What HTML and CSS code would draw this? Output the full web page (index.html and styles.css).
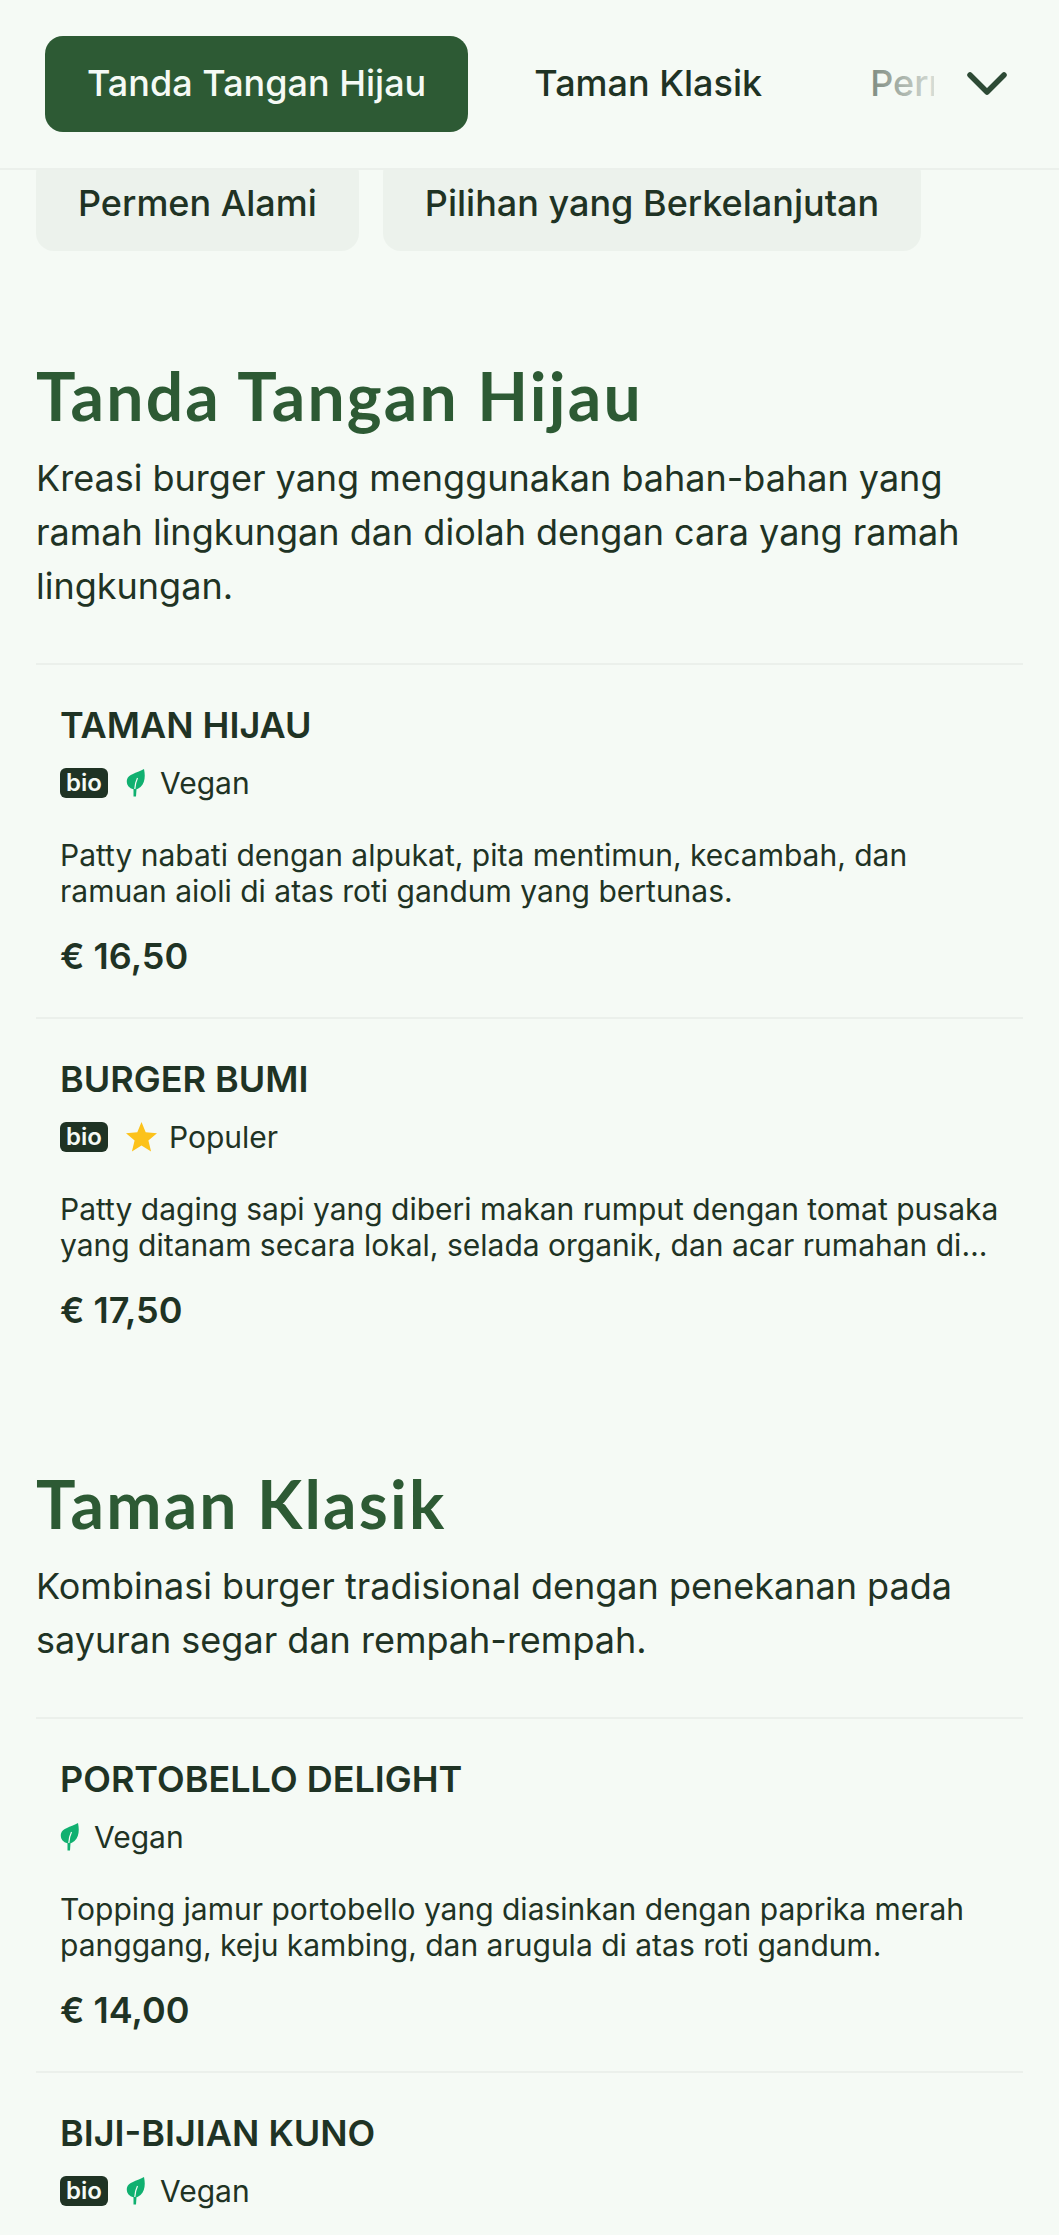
FILE: index.html
```html
<!DOCTYPE html>
<html lang="id">
<head>
  <meta charset="UTF-8">
  <meta name="viewport" content="width=device-width, initial-scale=1.0">
  <title>Menu Burger</title>
  <link rel="stylesheet" href="styles.css">
</head>
<body>
  <header class="topbar">
    <nav class="tabs">
      <a class="tab tab-active">Tanda Tangan Hijau</a>
      <a class="tab">Taman Klasik</a>
      <a class="tab">Permen Alami</a>
    </nav>
    <button class="expand" type="button" aria-label="Buka kategori">
      <svg width="40" height="23" viewBox="0 0 40 23" fill="none" stroke="#2d4a35" stroke-width="5.500" stroke-linecap="round" stroke-linejoin="round"><path d="M3 3 L20 20 L37 3"/></svg>
    </button>
  </header>

  <main class="page">
    <div class="chips">
      <a class="chip">Permen Alami</a>
      <a class="chip">Pilihan yang Berkelanjutan</a>
    </div>

    <section class="category">
      <h2>Tanda Tangan Hijau</h2>
      <p class="intro">Kreasi burger yang menggunakan bahan-bahan yang ramah lingkungan dan diolah dengan cara yang ramah lingkungan.</p>

      <article class="item">
        <h3>TAMAN HIJAU</h3>
        <div class="meta">
          <span class="bio">bio</span>
          <svg class="leaf" viewBox="0 0 19 28"><path d="M18 0 C19.500 7 19 14 14.500 18 C13 19.300 11.500 20 10.500 20.300 L10 27.500 L7.500 27.500 L7.500 20.300 C2.500 19 0 15 1 10.500 C2.300 5.500 10 4 18 0 Z"/><path class="vein" d="M8.800 20 C9 16 9.500 13 11.500 9"/></svg>
          <span>Vegan</span>
        </div>
        <p class="desc">Patty nabati dengan alpukat, pita mentimun, kecambah, dan ramuan aioli di atas roti gandum yang bertunas.</p>
        <div class="price">€ 16,50</div>
      </article>

      <article class="item">
        <h3>BURGER BUMI</h3>
        <div class="meta">
          <span class="bio">bio</span>
          <svg class="star" viewBox="0 0 31 30"><path d="M15.500 0 L19.700 10.300 L31 11.200 L22.400 18.500 L25.100 29.500 L15.500 23.600 L5.900 29.500 L8.600 18.500 L0 11.200 L11.300 10.300 Z"/></svg>
          <span>Populer</span>
        </div>
        <p class="desc">Patty daging sapi yang diberi makan rumput dengan tomat pusaka yang ditanam secara lokal, selada organik, dan acar rumahan di atas roti brioche.</p>
        <div class="price">€ 17,50</div>
      </article>
    </section>

    <section class="category">
      <h2>Taman Klasik</h2>
      <p class="intro">Kombinasi burger tradisional dengan penekanan pada sayuran segar dan rempah-rempah.</p>

      <article class="item">
        <h3>PORTOBELLO DELIGHT</h3>
        <div class="meta">
          <svg class="leaf" viewBox="0 0 19 28"><path d="M18 0 C19.500 7 19 14 14.500 18 C13 19.300 11.500 20 10.500 20.300 L10 27.500 L7.500 27.500 L7.500 20.300 C2.500 19 0 15 1 10.500 C2.300 5.500 10 4 18 0 Z"/><path class="vein" d="M8.800 20 C9 16 9.500 13 11.500 9"/></svg>
          <span>Vegan</span>
        </div>
        <p class="desc">Topping jamur portobello yang diasinkan dengan paprika merah panggang, keju kambing, dan arugula di atas roti gandum.</p>
        <div class="price">€ 14,00</div>
      </article>

      <article class="item item-last">
        <h3>BIJI-BIJIAN KUNO</h3>
        <div class="meta">
          <span class="bio">bio</span>
          <svg class="leaf" viewBox="0 0 19 28"><path d="M18 0 C19.500 7 19 14 14.500 18 C13 19.300 11.500 20 10.500 20.300 L10 27.500 L7.500 27.500 L7.500 20.300 C2.500 19 0 15 1 10.500 C2.300 5.500 10 4 18 0 Z"/><path class="vein" d="M8.800 20 C9 16 9.500 13 11.500 9"/></svg>
          <span>Vegan</span>
        </div>
      </article>
    </section>
  </main>
</body>
</html>
```

FILE: styles.css
```css
html, body {
  margin: 0;
  padding: 0;
}

body {
  font-family: Inter, 'Noto Sans', Arial, sans-serif;
  background: #f5faf5;
  color: #1f3324;
  height: 2235px;
  overflow: hidden;
  position: relative;
}

.topbar {
  position: absolute;
  top: 0;
  left: 0;
  right: 0;
  height: 168px;
  background: #f5faf5;
  border-bottom: 2px solid #ebf0eb;
  z-index: 2;
  display: flex;
  align-items: flex-start;
}

.tabs {
  display: flex;
  gap: 24px;
  margin: 36px 0 0 45px;
  width: 889px;
  flex: none;
  overflow: hidden;
  position: relative;
}

.tabs::after {
  content: "";
  position: absolute;
  top: 0;
  bottom: 0;
  right: 0;
  width: 134px;
  background: linear-gradient(to right, rgba(245, 250, 245, 0), rgba(245, 250, 245, 0.85));
}

.tab {
  flex: none;
  font-size: 36px;
  font-weight: 500;
  line-height: 94px;
  padding: 0 42px 2px;
  border-radius: 18px;
  white-space: nowrap;
}

.tab-active {
  background: #2d5a34;
  color: #f5faf5;
}

.expand {
  background: none;
  border: none;
  padding: 0;
  margin: 72px 0 0 33px;
  line-height: 0;
}

.page {
  padding: 0 36px;
}

.chips {
  display: flex;
  gap: 24px;
  height: 251px;
  align-items: flex-end;
}

.chip {
  background: #ecf2ec;
  border-radius: 18px;
  font-size: 36px;
  font-weight: 500;
  line-height: 96px;
  padding: 0 42px;
  white-space: nowrap;
}

.category {
  margin-bottom: 88px;
}

.category:last-child {
  margin-bottom: 0;
}

h2 {
  font-family: Lato, 'Noto Sans', sans-serif;
  font-size: 66px;
  font-weight: 700;
  letter-spacing: 2.2px;
  line-height: 90px;
  color: #2d5a34;
  margin: 0;
  padding-top: 100px;
}

.category + .category h2 {
  padding-top: 0;
}

.intro {
  font-size: 36px;
  line-height: 54px;
  margin: 10px 0 50px;
}

.item {
  border-top: 2px solid #ebf0eb;
  padding: 33px 24px 34px;
}

.item-last {
  padding-bottom: 0;
}

h3 {
  font-size: 36px;
  font-weight: 600;
  line-height: 54px;
  margin: 0;
}

.meta {
  display: flex;
  align-items: center;
  font-size: 30px;
  height: 36px;
  margin-top: 13px;
}

.bio {
  width: 48px;
  margin-right: 18px;
  background: #1f3324;
  color: #f5faf5;
  font-size: 24px;
  font-weight: 600;
  line-height: 30px;
  text-align: center;
  border-radius: 6px;
}

.leaf {
  width: 19px;
  height: 28px;
  margin-right: 15px;
  fill: #10b070;
}

.vein {
  fill: none;
  stroke: #f5faf5;
  stroke-width: 1.200;
}

.star {
  width: 31px;
  height: 30px;
  margin-right: 12px;
  fill: #fcc21b;
}

.desc {
  font-size: 30px;
  line-height: 36px;
  margin: 36px 0 0;
  display: -webkit-box;
  -webkit-box-orient: vertical;
  -webkit-line-clamp: 2;
  overflow: hidden;
}

.price {
  font-size: 36px;
  font-weight: 600;
  line-height: 54px;
  margin-top: 20px;
}
```
